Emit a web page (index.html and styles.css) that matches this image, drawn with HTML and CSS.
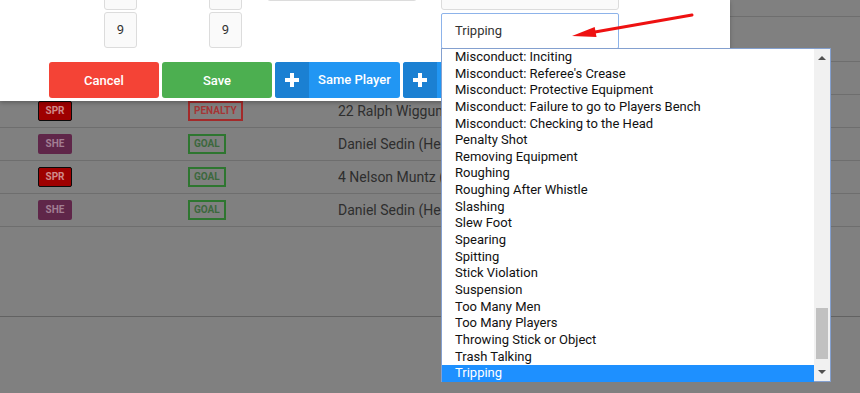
FILE: index.html
```html
<!DOCTYPE html>
<html lang="en">
<head>
    <meta charset="UTF-8">
    <meta name="viewport" content="width=device-width, initial-scale=1.0">
    <title>Game Events</title>
    <link rel="stylesheet" href="styles.css">
</head>
<body>

<div class="events">
    <div class="row row-head"></div>
    <div class="row row-top"></div>
    <div class="row"></div>
    <div class="row">
        <span class="team spr">SPR</span>
        <span class="tag penalty">PENALTY</span>
        <span class="player">22 Ralph Wiggum (Springfield)</span>
    </div>
    <div class="row">
        <span class="team she">SHE</span>
        <span class="tag goal">GOAL</span>
        <span class="player">Daniel Sedin (Henrik Sedin)</span>
    </div>
    <div class="row">
        <span class="team spr">SPR</span>
        <span class="tag goal">GOAL</span>
        <span class="player">4 Nelson Muntz (12 Bart Simpson)</span>
    </div>
    <div class="row">
        <span class="team she">SHE</span>
        <span class="tag goal">GOAL</span>
        <span class="player">Daniel Sedin (Henrik Sedin)</span>
    </div>
    <div class="events-end"></div>
</div>

<!-- edit event modal, scrolled a little -->
<div class="modal">
    <div class="fields">
        <div class="field col-num">
            <div class="box"></div>
            <div class="box">9</div>
        </div>
        <div class="field col-num col-num2">
            <div class="box"></div>
            <div class="box">9</div>
        </div>
        <div class="field col-wide">
            <div class="box"></div>
        </div>
        <div class="field col-select">
            <div class="box"></div>
            <div class="select">Tripping</div>
        </div>
    </div>
    <div class="actions">
        <button class="btn btn-cancel">Cancel</button>
        <button class="btn btn-save">Save</button>
        <button class="btn btn-plus">
            <span class="plus">
                <svg width="16" height="16" viewBox="0 0 16 16"><rect x="6" y="1" width="4" height="14" fill="#fff"/><rect x="1" y="6" width="14" height="4" fill="#fff"/></svg>
            </span>
            <span class="label">Same Player</span>
        </button>
        <button class="btn btn-plus btn-short">
            <span class="plus">
                <svg width="16" height="16" viewBox="0 0 16 16"><rect x="6" y="1" width="4" height="14" fill="#fff"/><rect x="1" y="6" width="14" height="4" fill="#fff"/></svg>
            </span>
        </button>
    </div>
</div>

<!-- open dropdown of the penalty select -->
<div class="options">
    <ul class="option-list">
        <li>Misconduct: Inciting</li>
        <li>Misconduct: Referee's Crease</li>
        <li>Misconduct: Protective Equipment</li>
        <li>Misconduct: Failure to go to Players Bench</li>
        <li>Misconduct: Checking to the Head</li>
        <li>Penalty Shot</li>
        <li>Removing Equipment</li>
        <li>Roughing</li>
        <li>Roughing After Whistle</li>
        <li>Slashing</li>
        <li>Slew Foot</li>
        <li>Spearing</li>
        <li>Spitting</li>
        <li>Stick Violation</li>
        <li>Suspension</li>
        <li>Too Many Men</li>
        <li>Too Many Players</li>
        <li>Throwing Stick or Object</li>
        <li>Trash Talking</li>
        <li class="selected">Tripping</li>
    </ul>
    <div class="scrollbar">
        <span class="sb-up"></span>
        <span class="sb-thumb"></span>
        <span class="sb-down"></span>
    </div>
</div>

<svg class="arrow" width="860" height="60" viewBox="0 0 860 60">
    <line x1="692" y1="15" x2="592" y2="32.5" stroke="#ee1111" stroke-width="3" stroke-linecap="round"/>
    <polygon points="572,36 596.5,37 594.7,27" fill="#ee1111"/>
</svg>

</body>
</html>
```

FILE: styles.css
```css
body {
    margin: 0;
    background-color: #808080;
    font-family: Roboto, 'Liberation Sans', sans-serif;
    color: #2e2e2e;
    overflow: hidden;
}

/* table behind the modal (already dimmed) */
.events {
    width: 860px;
}
.row {
    display: grid;
    grid-template-columns: 150px 150px auto;
    align-items: center;
    height: 32px;
    padding-left: 38px;
    border-bottom: 1px solid #6e6e6e;
}
.row-head {
    height: 16px;
}
.row-top {
    height: 44px;
}
.events-end {
    height: 89px;
    border-bottom: 1px solid #626262;
}
.team {
    width: 34px;
    height: 20px;
    box-sizing: border-box;
    border-radius: 2px;
    font-size: 10px;
    font-weight: 700;
    line-height: 20px;
    text-align: center;
}
.team.spr {
    background-color: #9e0000;
    border: 1px solid #0a0a0a;
    line-height: 18px;
    color: #d08a8a;
}
.team.she {
    background-color: #5f2649;
    color: #a27e93;
}
.tag {
    justify-self: start;
    height: 20px;
    box-sizing: border-box;
    padding: 0 4px;
    font-size: 10px;
    font-weight: 700;
    line-height: 16px;
}
.tag.penalty {
    border: 2px solid #a32a2a;
    color: #a43636;
}
.tag.goal {
    border: 2px solid #2e7630;
    color: #3c683d;
}
/* the open dropdown covers the rest of the name */
.player {
    width: 103px;
    overflow: hidden;
    font-size: 14px;
    white-space: nowrap;
}

/* modal */
.modal {
    position: absolute;
    top: 0;
    left: 0;
    width: 730px;
    height: 101px;
    background-color: #ffffff;
    box-shadow: 0 2px 4px rgba(0, 0, 0, 0.25);
    overflow: hidden;
}
.fields {
    display: flex;
    align-items: flex-start;
    margin-top: -26px;
}
.field {
    display: flex;
    flex-direction: column;
}
.box {
    box-sizing: border-box;
    background-color: #fafafa;
    border: 1px solid #dcdcdc;
    border-radius: 3px;
    font-size: 13px;
    color: #333;
    text-align: center;
}
.col-num {
    width: 33px;
    margin-left: 104px;
    gap: 2px;
}
.col-num .box {
    height: 36px;
    line-height: 34px;
}
.col-num2 {
    margin-left: 72px;
}
.col-wide {
    width: 150px;
    margin-left: 25px;
}
.col-wide .box {
    height: 27px;
}
.col-select {
    width: 178px;
    margin-left: 24px;
    gap: 3px;
}
.col-select .box {
    height: 36px;
}
.select {
    height: 36px;
    box-sizing: border-box;
    padding-left: 13px;
    border: 1px solid #8db3ea;
    border-radius: 2px;
    font-size: 13px;
    line-height: 34px;
    color: #333;
}
.actions {
    display: flex;
    gap: 3px;
    margin-top: 13px;
    padding-left: 49px;
}
.btn {
    height: 36px;
    border: none;
    border-radius: 3px;
    padding: 0;
    color: #fff;
    font-family: Roboto, 'Liberation Sans', sans-serif;
    font-size: 13px;
    font-weight: 500;
}
.btn-cancel {
    width: 110px;
    background-color: #f44336;
}
.btn-save {
    width: 110px;
    background-color: #4caf50;
}
.btn-plus {
    display: flex;
    width: 125px;
    background-color: #2196f3;
    overflow: hidden;
}
.btn-plus .plus {
    display: flex;
    align-items: center;
    justify-content: center;
    width: 34px;
    height: 36px;
    background-color: #1b80d2;
}
.btn-plus .label {
    flex: 1;
    line-height: 36px;
    text-align: center;
}
.btn-short {
    width: 80px;
}

/* dropdown */
.options {
    position: absolute;
    top: 48px;
    left: 441px;
    width: 390px;
    height: 334px;
    box-sizing: border-box;
    border: 1px solid #84a0cf;
    background-color: #ffffff;
    display: flex;
}
.option-list {
    flex: 1;
    margin: 0;
    padding: 0;
    list-style: none;
}
.option-list li {
    height: 16.65px;
    padding-left: 13px;
    font-size: 13px;
    line-height: 16.65px;
    color: #111;
    white-space: nowrap;
}
.option-list li.selected {
    background-color: #1e90ff;
    color: #ffffff;
}
.scrollbar {
    position: relative;
    width: 16px;
    background-color: #f1f1f1;
}
.sb-up, .sb-down {
    position: absolute;
    left: 4px;
    width: 0;
    height: 0;
    border-left: 4px solid transparent;
    border-right: 4px solid transparent;
}
.sb-up {
    top: 7px;
    border-bottom: 4px solid #505050;
}
.sb-down {
    bottom: 7px;
    border-top: 4px solid #505050;
}
.sb-thumb {
    position: absolute;
    top: 259px;
    left: 2px;
    width: 12px;
    height: 51px;
    background-color: #c1c1c1;
}

.arrow {
    position: absolute;
    top: 0;
    left: 0;
}
```
